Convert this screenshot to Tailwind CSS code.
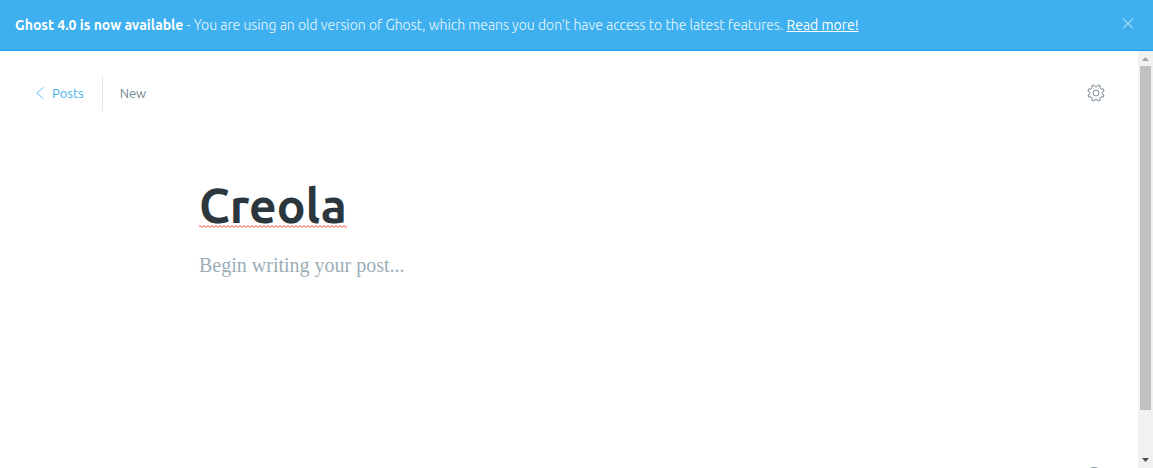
<!DOCTYPE html>
<html lang="en">
<head>
<meta charset="utf-8">
<meta name="viewport" content="width=device-width, initial-scale=1">
<title>Ghost - New post</title>
<script src="https://cdn.jsdelivr.net/npm/@tailwindcss/browser@4"></script>
</head>
<body class="flex h-screen flex-col overflow-hidden bg-white font-['Ubuntu','Open_Sans',sans-serif]">
  <aside class="flex shrink-0 items-center justify-between border-b border-[#1a9eee] bg-[#3eb0ef] pr-[19px] pl-[15px] text-sm font-light text-white/90">
    <p class="py-[15px] leading-5"><b class="font-bold text-white">Ghost 4.0 is now available</b> - You are using an old version of Ghost, which means you don't have access to the latest features. <a href="#" class="font-normal text-white underline">Read more!</a></p>
    <button type="button" aria-label="Close" class="mb-1 shrink-0">
      <svg class="block size-[12px]" viewBox="0 0 12 12" fill="none" stroke="#fff" stroke-opacity=".8"><path d="M1 1.500l10 10M11 1.500l-10 10"/></svg>
    </button>
  </aside>
  <div class="flex min-h-0 flex-1">
    <main class="relative min-w-0 flex-1 overflow-hidden">
      <header class="flex items-center justify-between pt-6 pr-[33px] pl-9 text-[13px] leading-5">
        <nav class="flex h-9 items-center">
          <a href="#" class="flex h-full items-center gap-2 border-r border-[#dfe9f0] pr-[18px] text-[#3eb0ef]">
            <svg class="h-3 w-2" viewBox="0 0 8 12" fill="none" stroke="#3eb0ef" stroke-opacity=".75" stroke-linecap="round" stroke-linejoin="round"><path d="M7.3.5L.7 6l6.6 5.500"/></svg>
            Posts
          </a>
          <span class="pl-[17px] text-[#738a94]">New</span>
        </nav>
        <button type="button" aria-label="Settings">
          <svg class="block size-[18px]" viewBox="-9 -9 18 18" fill="none" stroke="#738a94" stroke-linejoin="round"><circle r="3"/><path d="M6.240-.88V.88L8.040 2.080 7.150 4.210 5.030 3.790 3.790 5.030 4.210 7.150 2.080 8.040.88 6.240H-.88L-2.080 8.040-4.210 7.150-3.790 5.030-5.030 3.790-7.150 4.210-8.040 2.080-6.240.88V-.88L-8.040-2.080-7.150-4.210-5.030-3.790-3.790-5.030-4.210-7.150-2.080-8.040-.88-6.240H.88L2.080-8.040 4.210-7.150 3.790-5.030 5.030-3.790 7.150-4.210 8.040-2.080Z"/></svg>
        </button>
      </header>
      <section class="mx-auto max-w-[740px] pt-[66px]">
        <h1 contenteditable="true" spellcheck="false" role="textbox" aria-label="Post title" class="text-[48px] leading-[56px] font-bold text-[#2b373d]"><span class="relative inline-block">Creola<svg class="absolute bottom-[5px] left-0 h-[3px] w-full" aria-hidden="true"><defs><pattern id="wave" width="4" height="3" patternUnits="userSpaceOnUse"><path d="M-1 2.500L1 .5l2 2 2-2" fill="none" stroke="#f44"/></pattern></defs><rect width="100%" height="3" fill="url(#wave)"/></svg></span></h1>
        <textarea aria-label="Post content" placeholder="Begin writing your post..." class="mt-4 block w-full resize-none font-['Liberation_Serif',serif] text-[20px] leading-8 placeholder:text-[#9baeb8] focus:outline-none"></textarea>
      </section>
      <a href="#" aria-label="Help" class="absolute right-[35px] -bottom-[17px]">
        <svg class="block size-[18px]" viewBox="0 0 18 18" fill="none" stroke="#738a94"><circle cx="9" cy="9" r="8.500"/><path d="M7 7a2 2 0 1 1 2 2v2M9 13v1"/></svg>
      </a>
    </main>
    <div aria-hidden="true" class="flex w-[15px] shrink-0 flex-col items-center bg-[#f1f1f1]">
      <svg class="h-[15px] w-[15px] shrink-0" viewBox="0 0 15 15" fill="#a3a3a3"><path d="M4 10h7L7.500 6z"/></svg>
      <div class="min-h-0 w-[11px] flex-1"><div class="h-[89%] bg-[#c1c1c1]"></div></div>
      <svg class="h-[15px] w-[15px] shrink-0" viewBox="0 0 15 15" fill="#505050"><path d="M4 5h7L7.500 9z"/></svg>
    </div>
  </div>
</body>
</html>
